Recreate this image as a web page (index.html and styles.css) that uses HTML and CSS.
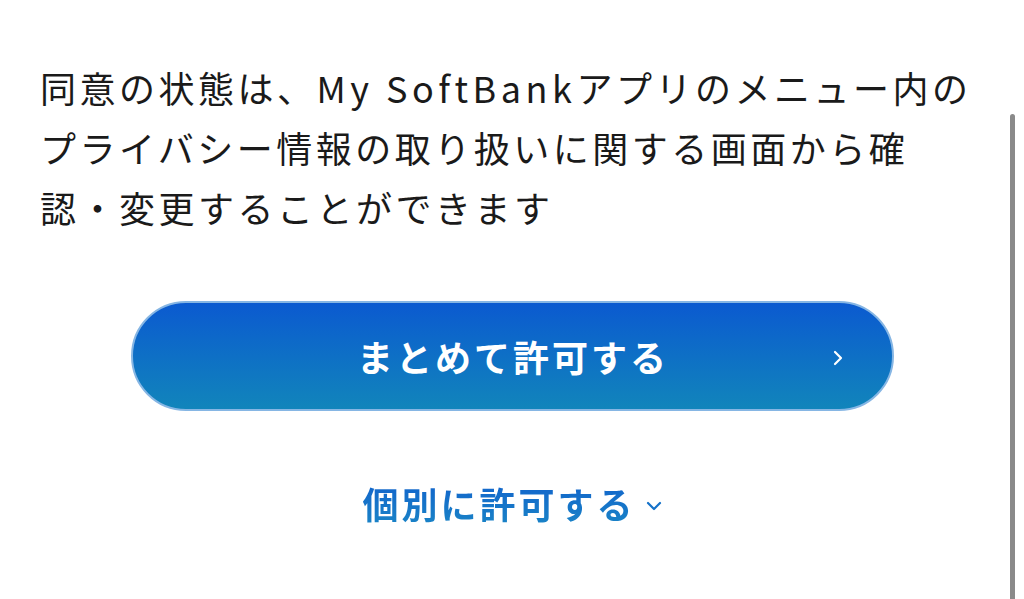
FILE: index.html
```html
<!DOCTYPE html>
<html lang="ja">
<head>
    <meta charset="UTF-8">
    <meta name="viewport" content="width=device-width, initial-scale=1.0">
    <title>同意の確認</title>
    <link rel="stylesheet" href="styles.css">
</head>
<body>

<!-- 説明文 -->
<main class="consent">
    <p class="consent-text">同意の状態は、<span class="latin">My SoftBank</span>アプリのメニュー内の<br>プライバシー情報の取り扱いに関する画面から確<br>認・変更することができます</p>

    <!-- まとめて許可 -->
    <div class="actions">
        <button class="btn-allow">
            <span class="btn-label">まとめて許可する</span>
            <svg class="btn-arrow" width="12" height="18" viewBox="0 0 12 18"><path d="M3 3 L9 9 L3 15" fill="none" stroke="#fff" stroke-width="2.2" stroke-linecap="round" stroke-linejoin="round"/></svg>
        </button>

        <a class="link-each" href="#">
            <span class="link-label">個別に許可する</span>
            <svg class="link-arrow" width="16" height="10" viewBox="0 0 16 10"><path d="M2 2 L8 8 L14 2" fill="none" stroke="#1572c9" stroke-width="2.2" stroke-linecap="round" stroke-linejoin="round"/></svg>
        </a>
    </div>
</main>

<!-- スクロールバー -->
<div class="scrollbar"></div>

</body>
</html>
```

FILE: styles.css
```css
/* 全体 */
body {
    margin: 0;
    background: #fff;
    font-family: "Noto Sans CJK JP", "Noto Sans", sans-serif;
    color: #1a1a1a;
    overflow: hidden;
}

.consent {
    padding: 57px 40px 0 40px;
}

.consent-text {
    margin: 0;
    font-size: 36px;
    line-height: 60px;
    letter-spacing: 3.5px;
}

.consent-text .latin {
    letter-spacing: 4.5px;
}

/* ボタン */
.actions {
    display: flex;
    flex-direction: column;
    align-items: center;
    margin-top: 64px;
}

.btn-allow {
    position: relative;
    width: 763px;
    height: 110px;
    border-radius: 55px;
    border: 2px solid #86b6e4;
    background: linear-gradient(to bottom, #0b5ad0, #1185bb);
    color: #fff;
    font-family: inherit;
    font-size: 36px;
    font-weight: bold;
    letter-spacing: 3px;
    display: flex;
    align-items: center;
    justify-content: center;
    cursor: pointer;
}

.btn-label {
    margin-left: 2px;
}

.btn-arrow {
    position: absolute;
    right: 48px;
    top: 46px;
}

/* 個別リンク */
.link-each {
    display: flex;
    align-items: center;
    margin-top: 66px;
    text-decoration: none;
    font-size: 36px;
    font-weight: bold;
    letter-spacing: 3px;
    color: #1470c8;
}

.link-label {
    background: linear-gradient(to bottom, #1160cc, #1a86c6);
    -webkit-background-clip: text;
    background-clip: text;
    color: transparent;
}

.link-arrow {
    margin-left: 10px;
    margin-top: 6px;
}

/* スクロールバー */
.scrollbar {
    position: fixed;
    right: 9px;
    top: 114px;
    bottom: -10px;
    width: 5px;
    border-radius: 3px;
    background: #8a8a8a;
}
```
